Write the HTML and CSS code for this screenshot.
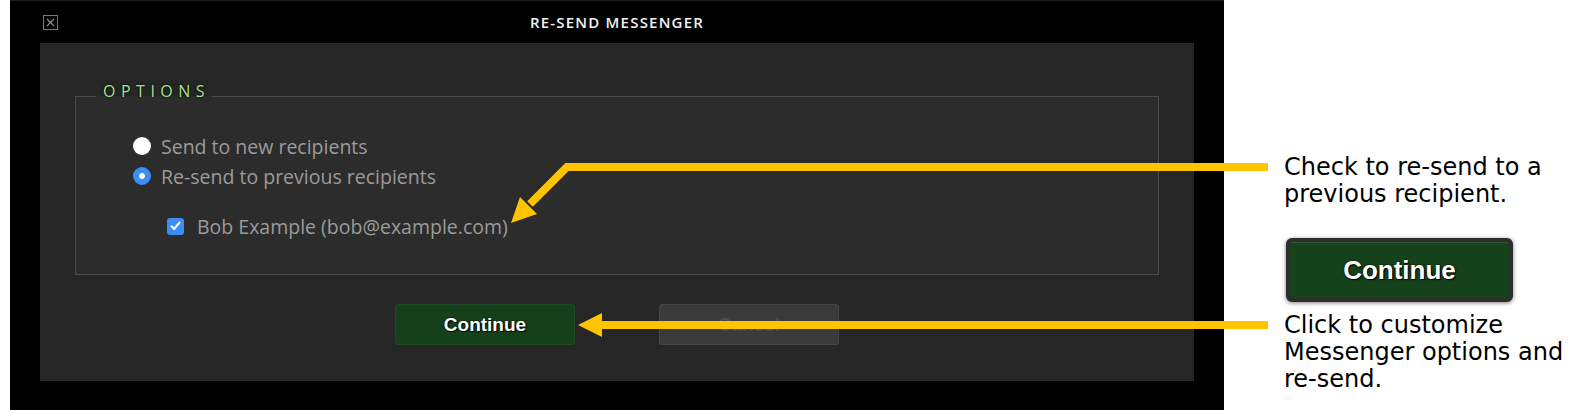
FILE: index.html
```html
<!DOCTYPE html>
<html lang="en">
<head>
  <meta charset="UTF-8" />
  <title>Re-send Messenger</title>
  <link rel="stylesheet" href="styles.css">
</head>
<body>
  <div class="page">
    <div class="window">
      <div class="titlebar">
        <span class="close">
          <svg width="15" height="15" viewBox="0 0 15 15"><rect x="0.5" y="0.5" width="14" height="14" fill="none" stroke="#7a7a7a"/><path d="M4 4 L11 11 M11 4 L4 11" stroke="#8a8a8a" stroke-width="1.2"/></svg>
        </span>
        <span class="title">RE-SEND MESSENGER</span>
        <span></span>
      </div>
      <div class="panel">
        <fieldset class="options">
          <legend>OPTIONS</legend>
          <div class="choices">
            <div class="row">
              <span class="radio"></span>
              <span>Send to new recipients</span>
            </div>
            <div class="row">
              <span class="radio checked"></span>
              <span>Re-send to previous recipients</span>
            </div>
            <div class="row recipient">
              <span class="check">
                <svg width="11" height="10" viewBox="0 0 11 10"><path d="M1.5 5.2 L4.2 8 L9.5 1.5" fill="none" stroke="#fff" stroke-width="2" stroke-linecap="round" stroke-linejoin="round"/></svg>
              </span>
              <span>Bob Example (bob@example.com)</span>
            </div>
          </div>
        </fieldset>
        <div class="buttons">
          <button class="btn continue">Continue</button>
          <button class="btn cancel">Cancel</button>
        </div>
      </div>
    </div>

    <div class="notes">
      <p class="note">Check to re-send to a<br>previous recipient.</p>
      <div class="big-btn"><span>Continue</span></div>
      <p class="note">Click to customize<br>Messenger options and<br>re-send.</p>
    </div>

    <svg class="arrows" width="1580" height="410" viewBox="0 0 1580 410">
      <polyline points="1268,167 567,167 530,204" fill="none" stroke="#ffc400" stroke-width="8" stroke-linejoin="miter"/>
      <polygon points="511,223 520,197 537,214" fill="#ffc400"/>
      <line x1="600" y1="325" x2="1268" y2="325" stroke="#ffc400" stroke-width="8"/>
      <polygon points="578,325 602,313 602,337" fill="#ffc400"/>
    </svg>
  </div>
</body>
</html>
```

FILE: styles.css
```css
body { margin: 0; background: #fff; }
.page { position: relative; display: flex; width: 1580px; height: 410px; overflow: hidden; }

.window { width: 1214px; margin-left: 10px; background: #000; border-top: 1px solid #1c1c1c; box-sizing: border-box; height: 410px; }
.titlebar { display: grid; grid-template-columns: 1fr auto 1fr; align-items: center; height: 42px; padding-left: 33px; padding-right: 33px; }
.close { display: flex; }
.title { font-family: "Open Sans", sans-serif; font-weight: 600; font-size: 15px; letter-spacing: 1.2px; color: #f2f2f2; }

.panel { margin: 0 30px; height: 338px; background: #262626; padding: 40px 35px 0; box-sizing: border-box; }
.options { margin: 0; padding: 0; height: 192px; box-sizing: border-box; border: 1px solid #4c4c4c; background: #2c2c2c; }
.options legend { margin-left: 20px; padding: 0 2px 10px 7px; font-family: "Open Sans", sans-serif; font-size: 16px; line-height: 16px; letter-spacing: 5.5px; color: #a7e28c; text-shadow: 0 0 3px #000; }
.choices { padding: 22px 0 0 57px; }

.row { display: flex; align-items: center; gap: 10px; height: 30px; font-family: "Open Sans", sans-serif; font-size: 19.5px; color: #9b9b9b; }
.radio { width: 18px; height: 18px; border-radius: 50%; background: #fff; box-sizing: border-box; }
.radio.checked { background: #3a8ef5; border: 6px solid #3a8ef5; background-clip: padding-box; }
.radio.checked::after { content: ""; display: block; width: 6px; height: 6px; border-radius: 50%; background: #fff; }
.recipient { margin-top: 20px; margin-left: 34px; gap: 13px; }
.check { display: flex; align-items: center; justify-content: center; width: 17px; height: 17px; border-radius: 3px; background: #3a8ef5; }

.buttons { display: flex; justify-content: center; gap: 84px; margin-top: 29px; }
.btn { width: 180px; height: 41px; border-radius: 3px; font-family: "Liberation Sans", Arial, sans-serif; font-weight: bold; font-size: 19px; }
.continue { background: #15401a; border: 1px solid #20492a; color: #fff; text-shadow: 1px 1px 1px #000, 0 0 2px #000; }
.cancel { background: #3a3a3a; border: 1px solid #464646; color: #4c4c4c; }

.notes { display: flex; flex-direction: column; align-items: flex-start; padding-left: 60px; padding-top: 154px; }
.note { margin: 0; font-family: "DejaVu Sans", Verdana, sans-serif; font-size: 24px; line-height: 27px; color: #000; }
.big-btn { margin: 30px 0 10px 2px; width: 227px; height: 64px; box-sizing: border-box; border: 4px solid #2e2e2e; border-radius: 6px; background: #15421a; box-shadow: 0 1px 4px rgba(0,0,0,0.5), inset 0 1px 0 #2b5a30; display: flex; align-items: center; justify-content: center; }
.big-btn span { font-family: "Liberation Sans", Arial, sans-serif; font-weight: bold; font-size: 26px; color: #fff; text-shadow: 1px 1px 1px #000, 0 0 2px #000; }

.arrows { position: absolute; left: 0; top: 0; pointer-events: none; }
```
